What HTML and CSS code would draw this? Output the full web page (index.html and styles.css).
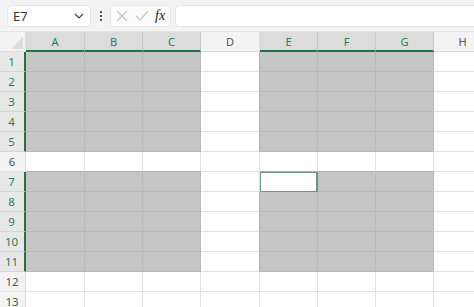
FILE: index.html
```html
<!DOCTYPE html>
<html lang="en">
  <head>
    <meta charset="UTF-8" />
    <meta name="viewport" content="width=device-width, initial-scale=1.0" />
    <title>Sheet</title>
    <link rel="stylesheet" href="styles.css">
  </head>
  <body>
    <div class="toolbar">
      <div class="namebox">
        <span>E7</span>
        <svg class="chev" width="10" height="6" viewBox="0 0 10 6"><path d="M1 1l4 4 4-4" fill="none" stroke="#444" stroke-width="1.2"/></svg>
      </div>
      <div class="dots"><i></i><i></i><i></i></div>
      <div class="fbtns">
        <svg width="12" height="12" viewBox="0 0 12 12"><path d="M1 1l10 10M11 1L1 11" stroke="#c4c4c4" stroke-width="1.2"/></svg>
        <svg width="14" height="12" viewBox="0 0 14 12"><path d="M1 6l4 4 8-9" fill="none" stroke="#c4c4c4" stroke-width="1.2"/></svg>
        <span class="fx">fx</span>
      </div>
      <div class="formula"></div>
    </div>

    <div class="sheet">
      <div class="corner"></div>
      <div class="ch on">A</div><div class="ch on">B</div><div class="ch on">C</div><div class="ch">D</div>
      <div class="ch on">E</div><div class="ch on">F</div><div class="ch on">G</div><div class="ch">H</div>

      <div class="rh on">1</div>
      <div class="c s"></div><div class="c s"></div><div class="c s"></div><div class="c edge"></div>
      <div class="c s"></div><div class="c s"></div><div class="c s"></div><div class="c"></div>

      <div class="rh on">2</div>
      <div class="c s"></div><div class="c s"></div><div class="c s"></div><div class="c edge"></div>
      <div class="c s"></div><div class="c s"></div><div class="c s"></div><div class="c"></div>

      <div class="rh on">3</div>
      <div class="c s"></div><div class="c s"></div><div class="c s"></div><div class="c edge"></div>
      <div class="c s"></div><div class="c s"></div><div class="c s"></div><div class="c"></div>

      <div class="rh on">4</div>
      <div class="c s"></div><div class="c s"></div><div class="c s"></div><div class="c edge"></div>
      <div class="c s"></div><div class="c s"></div><div class="c s"></div><div class="c"></div>

      <div class="rh on">5</div>
      <div class="c s"></div><div class="c s"></div><div class="c s"></div><div class="c edge"></div>
      <div class="c s"></div><div class="c s"></div><div class="c s"></div><div class="c"></div>

      <div class="rh">6</div>
      <div class="c top"></div><div class="c top"></div><div class="c top"></div><div class="c"></div>
      <div class="c top"></div><div class="c top"></div><div class="c top"></div><div class="c"></div>

      <div class="rh on">7</div>
      <div class="c s"></div><div class="c s"></div><div class="c s"></div><div class="c"></div>
      <div class="c active"></div><div class="c s"></div><div class="c s"></div><div class="c"></div>

      <div class="rh on">8</div>
      <div class="c s"></div><div class="c s"></div><div class="c s"></div><div class="c edge"></div>
      <div class="c s"></div><div class="c s"></div><div class="c s"></div><div class="c"></div>

      <div class="rh on">9</div>
      <div class="c s"></div><div class="c s"></div><div class="c s"></div><div class="c edge"></div>
      <div class="c s"></div><div class="c s"></div><div class="c s"></div><div class="c"></div>

      <div class="rh on">10</div>
      <div class="c s"></div><div class="c s"></div><div class="c s"></div><div class="c edge"></div>
      <div class="c s"></div><div class="c s"></div><div class="c s"></div><div class="c"></div>

      <div class="rh on">11</div>
      <div class="c s"></div><div class="c s"></div><div class="c s"></div><div class="c edge"></div>
      <div class="c s"></div><div class="c s"></div><div class="c s"></div><div class="c"></div>

      <div class="rh">12</div>
      <div class="c"></div><div class="c"></div><div class="c"></div><div class="c"></div>
      <div class="c"></div><div class="c"></div><div class="c"></div><div class="c"></div>

      <div class="rh">13</div>
      <div class="c"></div><div class="c"></div><div class="c"></div><div class="c"></div>
      <div class="c"></div><div class="c"></div><div class="c"></div><div class="c"></div>
    </div>
  </body>
</html>
```

FILE: styles.css
```css
* {
  box-sizing: border-box;
}

body {
  margin: 0;
  overflow: hidden;
  background: #fff;
  font-family: "Noto Sans", "Open Sans", sans-serif;
  color: #444;
}

/* barre du haut : zone de nom + barre de formule */
.toolbar {
  display: flex;
  align-items: center;
  height: 32px;
  padding: 4px 0 3px 7px;
  background: #f3f3f3;
  border-bottom: 1px solid #e2e2e2;
}

.namebox {
  display: flex;
  align-items: center;
  justify-content: space-between;
  width: 84px;
  height: 22px;
  padding: 0 5px 0 5px;
  background: #fff;
  border: 1px solid #e4e4e4;
  border-radius: 4px;
  font-size: 13px;
  color: #333;
}

.chev {
  margin-right: 1px;
}

.dots {
  display: flex;
  flex-direction: column;
  gap: 2px;
  margin: 0 8px 0 9px;
}

.dots i {
  width: 2px;
  height: 2px;
  background: #555;
}

.fbtns {
  display: flex;
  align-items: center;
  gap: 7px;
  width: 61px;
  height: 22px;
  padding: 0 0 0 5px;
  background: #fbfbfb;
  border: 1px solid #e8e8e8;
  border-radius: 4px;
}

.fx {
  font-family: "Liberation Serif", serif;
  font-style: italic;
  font-size: 14px;
  color: #222;
  margin-left: -1px;
}

.formula {
  flex: 1;
  height: 22px;
  margin-left: 4px;
  background: #fff;
  border: 1px solid #e4e4e4;
  border-right: 0;
  border-radius: 4px 0 0 4px;
}

/* grille */
.sheet {
  display: grid;
  grid-template-columns: 26px 59px 58px 58px 59px 58px 58px 58px 58px;
  grid-auto-rows: 20px;
}

.corner {
  position: relative;
  background: #f3f3f3;
  border-right: 1px solid #dcdcdc;
  border-bottom: 1px solid #dcdcdc;
}

.corner::after {
  content: "";
  position: absolute;
  right: 2px;
  bottom: 2px;
  border-style: solid;
  border-width: 0 0 12px 12px;
  border-color: transparent transparent #dcdcdc transparent;
}

.ch {
  display: flex;
  align-items: center;
  justify-content: center;
  background: #f3f3f3;
  border-right: 1px solid #dcdcdc;
  border-bottom: 1px solid #dcdcdc;
  font-size: 11px;
  color: #555;
}

.ch.on {
  background: #dcdcdc;
  color: #2f7a55;
  border-right-color: #c8c8c8;
  border-bottom: 2px solid #217346;
}

.rh {
  display: flex;
  align-items: center;
  justify-content: center;
  background: #f3f3f3;
  border-right: 1px solid #dcdcdc;
  border-bottom: 1px solid #e2e2e2;
  font-size: 11.5px;
  color: #555;
  padding-right: 1px;
}

.rh.on {
  background: #e8e8e8;
  color: #2f7a55;
  border-right: 2px solid #217346;
  border-bottom-color: #d4d4d4;
}

.c {
  border-right: 1px solid #e1e1e1;
  border-bottom: 1px solid #e1e1e1;
}

.c.s {
  background: #c6c6c6;
  border-color: #b9b9b9;
}

.c.edge {
  border-right-color: #b0b0b0;
}

.c.top {
  border-bottom-color: #b0b0b0;
}

.c.active {
  background: #fff;
  border: 1px solid #6f9482;
  border-width: 1px 2px 1px 1px;
}
```
